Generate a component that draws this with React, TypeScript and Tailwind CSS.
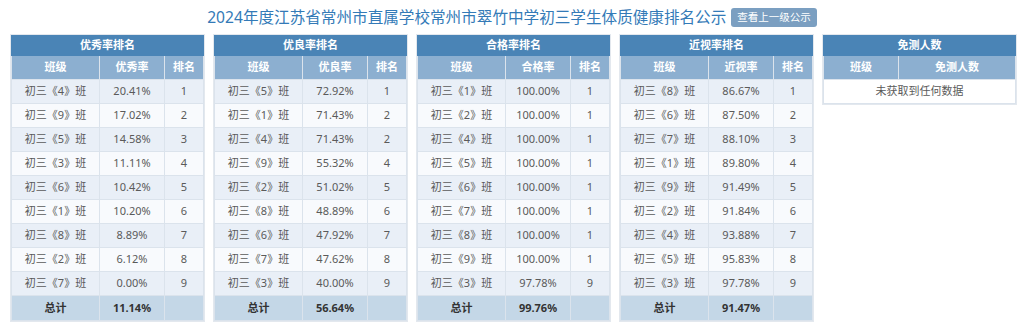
import React from 'react'

type Row = [string, string, string]

interface RankTable {
  title: string
  rateLabel: string
  rows: Row[]
  total: string
}

const tables: RankTable[] = [
  {
    title: '优秀率排名',
    rateLabel: '优秀率',
    total: '11.14%',
    rows: [
      ['初三《4》班', '20.41%', '1'],
      ['初三《9》班', '17.02%', '2'],
      ['初三《5》班', '14.58%', '3'],
      ['初三《3》班', '11.11%', '4'],
      ['初三《6》班', '10.42%', '5'],
      ['初三《1》班', '10.20%', '6'],
      ['初三《8》班', '8.89%', '7'],
      ['初三《2》班', '6.12%', '8'],
      ['初三《7》班', '0.00%', '9'],
    ],
  },
  {
    title: '优良率排名',
    rateLabel: '优良率',
    total: '56.64%',
    rows: [
      ['初三《5》班', '72.92%', '1'],
      ['初三《1》班', '71.43%', '2'],
      ['初三《4》班', '71.43%', '2'],
      ['初三《9》班', '55.32%', '4'],
      ['初三《2》班', '51.02%', '5'],
      ['初三《8》班', '48.89%', '6'],
      ['初三《6》班', '47.92%', '7'],
      ['初三《7》班', '47.62%', '8'],
      ['初三《3》班', '40.00%', '9'],
    ],
  },
  {
    title: '合格率排名',
    rateLabel: '合格率',
    total: '99.76%',
    rows: [
      ['初三《1》班', '100.00%', '1'],
      ['初三《2》班', '100.00%', '1'],
      ['初三《4》班', '100.00%', '1'],
      ['初三《5》班', '100.00%', '1'],
      ['初三《6》班', '100.00%', '1'],
      ['初三《7》班', '100.00%', '1'],
      ['初三《8》班', '100.00%', '1'],
      ['初三《9》班', '100.00%', '1'],
      ['初三《3》班', '97.78%', '9'],
    ],
  },
  {
    title: '近视率排名',
    rateLabel: '近视率',
    total: '91.47%',
    rows: [
      ['初三《8》班', '86.67%', '1'],
      ['初三《6》班', '87.50%', '2'],
      ['初三《7》班', '88.10%', '3'],
      ['初三《1》班', '89.80%', '4'],
      ['初三《9》班', '91.49%', '5'],
      ['初三《2》班', '91.84%', '6'],
      ['初三《4》班', '93.88%', '7'],
      ['初三《5》班', '95.83%', '8'],
      ['初三《3》班', '97.78%', '9'],
    ],
  },
]

const cell = 'border border-[#dbe3ec] text-center'

function RankCard({ t }: { t: RankTable }) {
  return (
    <div className="border border-[#e3e8ee] bg-white">
      <table className="w-full table-fixed border-collapse text-[11px]">
        <colgroup>
          <col className="w-[88px]" />
          <col className="w-[65px]" />
          <col />
        </colgroup>
        <thead>
          <tr className="h-[20px] bg-[#4a84b6] text-white">
            <th colSpan={3} className="border border-[#4a84b6] font-bold">
              {t.title}
            </th>
          </tr>
          <tr className="h-[24px] bg-[#8cafd0] text-white">
            <th className={`${cell} border-[#d4e0ec] font-bold`}>班级</th>
            <th className={`${cell} border-[#d4e0ec] font-bold`}>{t.rateLabel}</th>
            <th className={`${cell} border-[#d4e0ec] font-bold`}>排名</th>
          </tr>
        </thead>
        <tbody className="text-[#5a5a5a]">
          {t.rows.map((r, i) => (
            <tr key={i} className={`h-[24px] ${i % 2 === 0 ? 'bg-[#e9eff7]' : 'bg-[#f8fafd]'}`}>
              <td className={cell}>{r[0]}</td>
              <td className={cell}>{r[1]}</td>
              <td className={cell}>{r[2]}</td>
            </tr>
          ))}
          <tr className="h-[25px] bg-[#c4d7e7] font-bold text-[#333]">
            <td className={`${cell} border-[#d6e2ee]`}>总计</td>
            <td className={`${cell} border-[#d6e2ee]`}>{t.total}</td>
            <td className={`${cell} border-[#d6e2ee]`}></td>
          </tr>
        </tbody>
      </table>
    </div>
  )
}

export default function App() {
  return (
    <div
      className="h-[326px] w-[1024px] bg-white"
      style={{ fontFamily: '"Noto Sans", "Noto Sans CJK SC", sans-serif' }}
    >
      <div className="flex h-[34px] items-center justify-center gap-[5px] pt-[1px]">
        <h1 className="text-[15.6px] font-normal text-[#337ab7]">
          2024年度江苏省常州市直属学校常州市翠竹中学初三学生体质健康排名公示
        </h1>
        <button className="h-[19px] rounded-[3px] bg-[#7b9fc1] px-[6px] text-[10.5px] text-white">
          查看上一级公示
        </button>
      </div>
      <div className="grid grid-cols-[repeat(5,195px)] items-start gap-[8px] pl-[10px]">
        {tables.map((t) => (
          <RankCard key={t.title} t={t} />
        ))}
        <div className="border border-[#e3e8ee] bg-white">
          <table className="w-full table-fixed border-collapse text-[11px]">
            <colgroup>
              <col className="w-[75px]" />
              <col />
            </colgroup>
            <thead>
              <tr className="h-[20px] bg-[#4a84b6] text-white">
                <th colSpan={2} className="border border-[#4a84b6] font-bold">
                  免测人数
                </th>
              </tr>
              <tr className="h-[24px] bg-[#8cafd0] text-white">
                <th className={`${cell} border-[#d4e0ec] font-bold`}>班级</th>
                <th className={`${cell} border-[#d4e0ec] font-bold`}>免测人数</th>
              </tr>
            </thead>
            <tbody>
              <tr className="h-[24px] bg-white text-[#5a5a5a]">
                <td colSpan={2} className={cell}>
                  未获取到任何数据
                </td>
              </tr>
            </tbody>
          </table>
        </div>
      </div>
    </div>
  )
}
